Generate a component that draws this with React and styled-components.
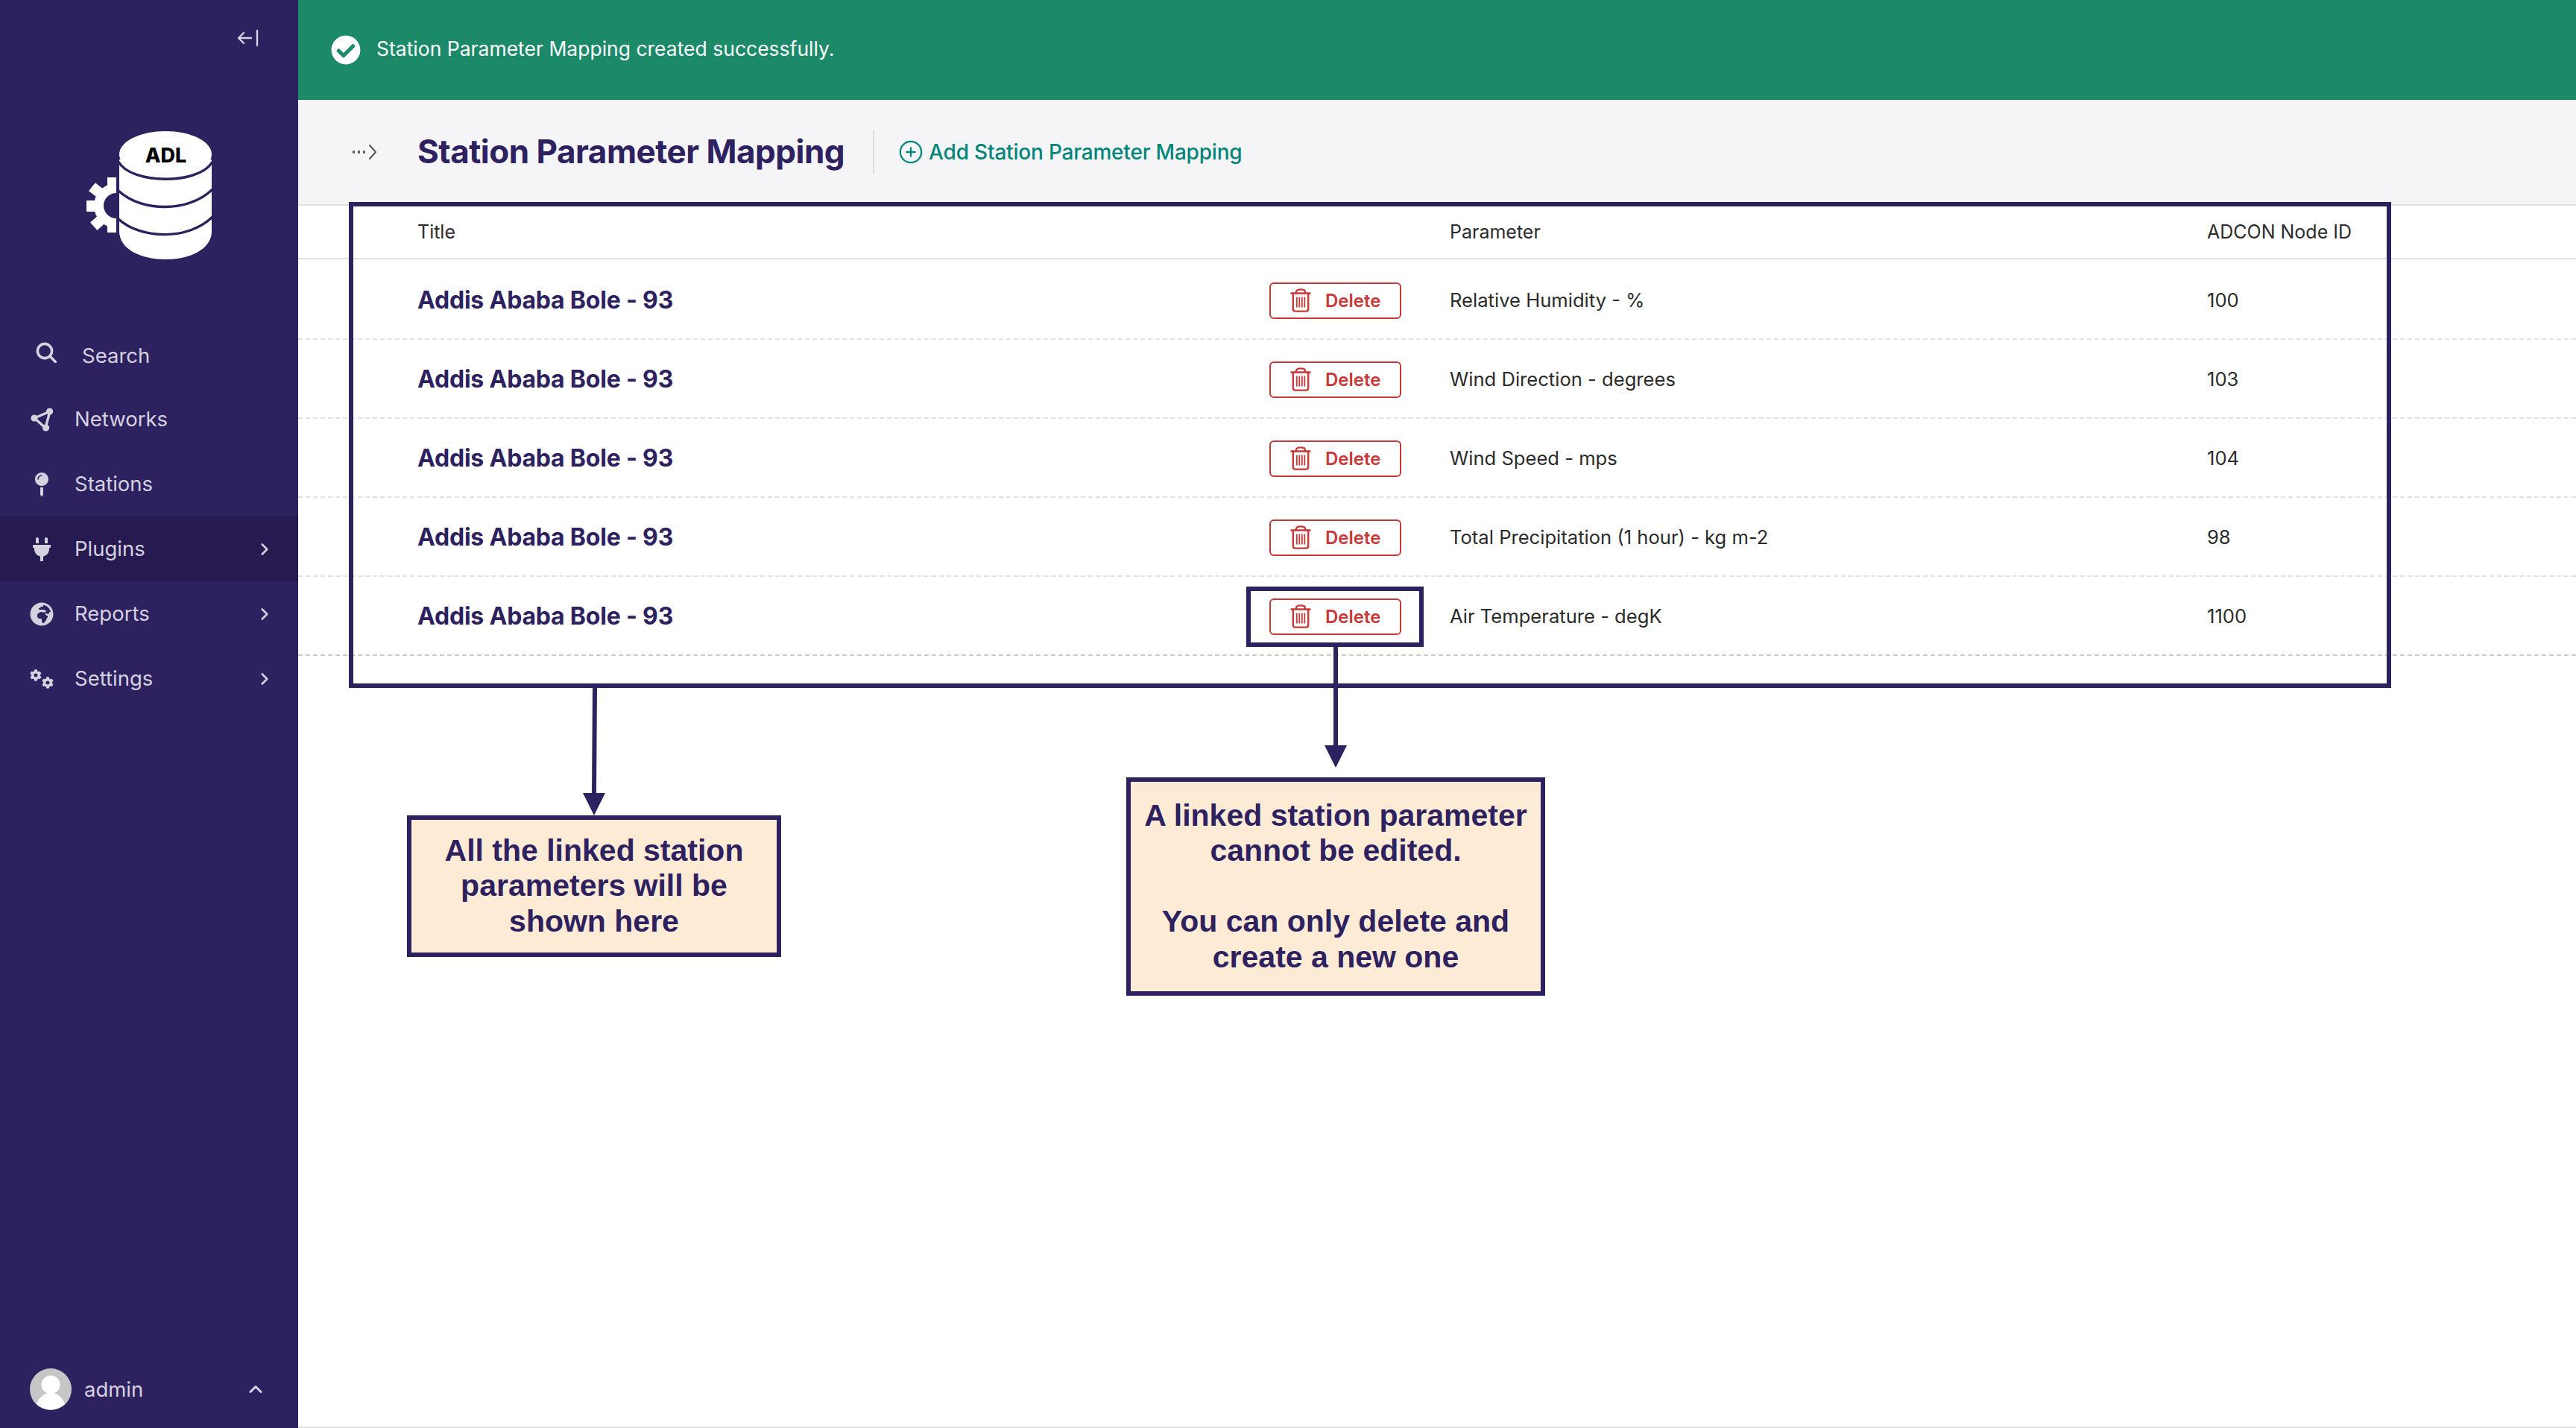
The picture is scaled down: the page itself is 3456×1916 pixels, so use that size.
import React from 'react'
import styled, { createGlobalStyle } from 'styled-components'
import { ChevronRight, ChevronUp, CirclePlus } from 'lucide-react'
import { FaCheckCircle, FaCog, FaGlobeAfrica, FaMapPin, FaPlug } from 'react-icons/fa'

const NAVY = '#2e2160'

const GlobalStyle = createGlobalStyle`
  html, body {
    margin: 0;
    padding: 0;
    background: #fff;
  }
  body {
    font-family: Inter, 'Liberation Sans', sans-serif;
  }
  * {
    box-sizing: border-box;
  }
`

const rows = [
  { param: 'Relative Humidity - %', node: '100' },
  { param: 'Wind Direction - degrees', node: '103' },
  { param: 'Wind Speed - mps', node: '104' },
  { param: 'Total Precipitation (1 hour) - kg m-2', node: '98' },
  { param: 'Air Temperature - degK', node: '1100' },
]

const CollapseIcon = () => (
  <svg width="30" height="24" viewBox="0 0 30 24" fill="none" stroke="#d5d2e0" strokeWidth="2.4" strokeLinecap="round" strokeLinejoin="round">
    <path d="M2 12h17M9 5l-7 7 7 7M27 2v20" />
  </svg>
)

const Logo = () => (
  <svg width="168" height="172" viewBox="116 176 168 172">
    <defs>
      <clipPath id="gear-clip">
        <rect x="110" y="230" width="46" height="90" />
      </clipPath>
    </defs>
    <g clipPath="url(#gear-clip)" fill="#fff">
      <path
        fillRule="evenodd"
        d="M156 246a30 30 0 1 0 0 60a30 30 0 1 0 0-60zM156 259a17 17 0 1 1 0 34a17 17 0 1 1 0-34z"
      />
      <rect x="144" y="238" width="20" height="16" />
      <rect x="144" y="298" width="20" height="14" />
      <rect x="116" y="269" width="16" height="15" />
      <rect x="122" y="248" width="15" height="14" transform="rotate(38 129 255)" />
      <rect x="124" y="292" width="15" height="14" transform="rotate(-42 131 299)" />
    </g>
    <path d="M160 214V310C160 335 190 348 222 348C254 348 284 335 284 310V214Z" fill="#fff" />
    <g fill="none" stroke={NAVY} strokeWidth="3.4">
      <path d="M159 217C176 248 268 248 285 217" />
      <path d="M159 256C190 285 254 285 285 254" />
      <path d="M159 294C190 322 254 322 285 291" />
    </g>
    <ellipse cx="222" cy="207" rx="62" ry="31" fill="#fff" />
    <text x="222.5" y="218" textAnchor="middle" fontFamily="Inter, sans-serif" fontSize="27" fontWeight="800" fill="#000">
      ADL
    </text>
  </svg>
)

const SearchIcon = () => (
  <svg width="28" height="28" viewBox="0 0 28 28" fill="none" stroke="#d5d2e0" strokeWidth="3.6" strokeLinecap="round">
    <circle cx="12" cy="12" r="9.6" />
    <path d="M19 19l7.4 7.4" />
  </svg>
)

const NetworkIcon = () => (
  <svg width="30" height="32" viewBox="0 0 30 32" fill="#d5d2e0">
    <path d="M5 14L26 5L20 27Z" fill="none" stroke="#d5d2e0" strokeWidth="3.4" strokeLinejoin="round" />
    <circle cx="5" cy="14" r="4.6" />
    <circle cx="25.6" cy="5" r="4.6" />
    <circle cx="20.6" cy="27" r="4.6" />
  </svg>
)

const TrashIcon = () => (
  <svg width="28" height="32" viewBox="0 0 28 32" fill="none" stroke="#c93838" strokeWidth="2.4" strokeLinecap="round" strokeLinejoin="round">
    <path d="M1.5 6.5h25" />
    <path d="M8 6V4.5C8 2.5 10 1.4 14 1.4s6 1.1 6 3.1V6" />
    <path d="M3.8 7v20.5c0 2 1.200 3.100 3 3.100h14.400c1.800 0 3-1.100 3-3.100V7" />
    <path d="M8.800 11.500v14M12.300 11.500v14M15.800 11.500v14M19.300 11.500v14" strokeLinecap="butt" strokeWidth="1.800" />
  </svg>
)

const BreadcrumbIcon = () => (
  <svg width="34" height="24" viewBox="0 0 34 24" fill="none">
    <path d="M1 12h3M8 12h3M15 12h3" stroke="#555" strokeWidth="3.4" />
    <path d="M24 3l8 9-8 9" stroke="#555" strokeWidth="2" strokeLinecap="round" strokeLinejoin="round" />
  </svg>
)

const AvatarIcon = () => (
  <svg width="56" height="56" viewBox="0 0 56 56">
    <circle cx="28" cy="28" r="28" fill="#c6c6c6" />
    <circle cx="28" cy="22" r="12.500" fill="#fff" />
    <path d="M9 48c3-9 10-15 19-15s16 6 19 15a28 28 0 0 1-38 0z" fill="#fff" />
  </svg>
)

const SettingsIcon = () => (
  <CogPair>
    <FaCog size={16} />
    <LowerCog>
      <FaCog size={16} />
    </LowerCog>
  </CogPair>
)

const navItems = [
  { label: 'Networks', icon: <NetworkIcon /> },
  { label: 'Stations', icon: <FaMapPin size={32} /> },
  { label: 'Plugins', icon: <FaPlug size={32} />, chevron: true, active: true },
  { label: 'Reports', icon: <FaGlobeAfrica size={32} />, chevron: true },
  { label: 'Settings', icon: <SettingsIcon />, chevron: true },
]

const App = () => {
  return (
    <>
      <GlobalStyle />
      <Page>
        <Sidebar>
          <CollapseRow>
            <CollapseIcon />
          </CollapseRow>
          <LogoRow>
            <Logo />
          </LogoRow>
          <SearchRow>
            <SearchSlot>
              <SearchIcon />
            </SearchSlot>
            <NavLabel>Search</NavLabel>
          </SearchRow>
          {navItems.map((item) => (
            <NavRow key={item.label} $active={item.active}>
              <NavIcon>{item.icon}</NavIcon>
              <NavLabel>{item.label}</NavLabel>
              {item.chevron && (
                <NavChevron $right={32}>
                  <ChevronRight size={26} strokeWidth={2.4} />
                </NavChevron>
              )}
            </NavRow>
          ))}
          <UserRow>
            <AvatarIcon />
            <UserName>admin</UserName>
            <NavChevron $right={43}>
              <ChevronUp size={28} strokeWidth={2.6} />
            </NavChevron>
          </UserRow>
        </Sidebar>
        <Main>
          <Banner>
            <FaCheckCircle size={40} color="#fff" />
            <BannerText>Station Parameter Mapping created successfully.</BannerText>
          </Banner>
          <PageHeader>
            <BreadcrumbSlot>
              <BreadcrumbIcon />
            </BreadcrumbSlot>
            <PageTitle>Station Parameter Mapping</PageTitle>
            <HeaderDivider />
            <AddLink>
              <CirclePlus size={34} strokeWidth={1.6} />
              Add Station Parameter Mapping
            </AddLink>
          </PageHeader>
          <HeadRow>
            <HeadCell>Title</HeadCell>
            <span />
            <HeadCell>Parameter</HeadCell>
            <HeadCell>ADCON Node ID</HeadCell>
          </HeadRow>
          <RowList>
            {rows.map((row, i) => (
              <DataRow key={row.node} $last={i === rows.length - 1}>
                <RowTitle>Addis Ababa Bole - 93</RowTitle>
                <DeleteButton>
                  <TrashIcon />
                  Delete
                </DeleteButton>
                <BodyCell>{row.param}</BodyCell>
                <BodyCell>{row.node}</BodyCell>
              </DataRow>
            ))}
          </RowList>
        </Main>

        {/* annotations drawn on top of the screenshot */}
        <Outline $x={468} $y={271} $w={2740} $h={652} />
        <Outline $x={1672} $y={787} $w={238} $h={81} />
        <ArrowLayer width="3456" height="1916">
          <path d="M798 922L797 1066" stroke={NAVY} strokeWidth="6" />
          <path d="M782 1064H812L797 1094Z" fill={NAVY} />
          <path d="M1792 868V1002" stroke={NAVY} strokeWidth="6" />
          <path d="M1777 1000H1807L1792 1030Z" fill={NAVY} />
        </ArrowLayer>
        <Callout $x={546} $y={1094} $w={502} $h={190}>
          All the linked station
          <br />
          parameters will be
          <br />
          shown here
        </Callout>
        <Callout $x={1511} $y={1043} $w={562} $h={293}>
          A linked station parameter
          <br />
          cannot be edited.
          <br />
          <br />
          You can only delete and
          <br />
          create a new one
        </Callout>
      </Page>
    </>
  )
}

const Page = styled.div`
  position: relative;
  display: flex;
  width: 3456px;
  height: 1916px;
  overflow: hidden;
`

const Sidebar = styled.aside`
  display: flex;
  flex-direction: column;
  flex: 0 0 400px;
  background: ${NAVY};
  color: #d5d2e0;
`

const CollapseRow = styled.div`
  display: flex;
  justify-content: flex-end;
  padding: 39px 52px 0 0;
  height: 176px;
`

const LogoRow = styled.div`
  display: flex;
  padding-left: 116px;
  height: 258px;
`

const SearchRow = styled.div`
  display: flex;
  align-items: center;
  height: 85px;
  padding: 2px 0 0 48px;
`

const SearchSlot = styled.div`
  display: flex;
  width: 62px;
  margin-top: -10px;
`

const NavRow = styled.div`
  display: flex;
  align-items: center;
  height: 87px;
  padding-left: 40px;
  background: ${({ $active }) => ($active ? '#271a50' : 'transparent')};
`

const NavIcon = styled.div`
  display: flex;
  justify-content: center;
  width: 32px;
  margin-right: 28px;
`

const CogPair = styled.div`
  display: flex;
  align-items: flex-start;
  height: 26px;
`

const LowerCog = styled.div`
  display: flex;
  margin-top: 10px;
`

const NavLabel = styled.span`
  font-size: 27.500px;
  line-height: 1;
`

const NavChevron = styled.div`
  display: flex;
  margin-left: auto;
  padding-right: ${({ $right }) => $right}px;
`

const UserRow = styled.div`
  display: flex;
  align-items: center;
  margin-top: auto;
  padding: 0 0 24px 40px;
`

const UserName = styled.span`
  margin-left: 17px;
  font-size: 27.500px;
`

const Main = styled.main`
  display: flex;
  flex-direction: column;
  flex: 1;
  border-bottom: 2px solid #e2e2e2;
`

const Banner = styled.div`
  display: flex;
  align-items: center;
  gap: 21px;
  height: 134px;
  padding-left: 44px;
  background: #1c8969;
`

const BannerText = styled.span`
  margin-top: -4px;
  font-size: 26.500px;
  color: #fff;
`

const PageHeader = styled.header`
  display: flex;
  align-items: center;
  height: 140px;
  background: #f5f5f7;
`

const BreadcrumbSlot = styled.div`
  display: flex;
  width: 160px;
  padding-left: 72px;
`

const PageTitle = styled.h1`
  margin: -2px 0 0;
  font-size: 44px;
  font-weight: 700;
  letter-spacing: -0.5px;
  color: ${NAVY};
`

const HeaderDivider = styled.div`
  width: 2px;
  height: 60px;
  margin: 0 32px 0 38px;
  background: #dedee2;
`

const AddLink = styled.a`
  display: flex;
  align-items: center;
  gap: 7px;
  font-size: 28px;
  font-weight: 500;
  letter-spacing: -0.2px;
  color: #00857a;
`

const HeadRow = styled.div`
  display: grid;
  grid-template-columns: 1143px 242px 1016px 1fr;
  align-items: center;
  height: 74px;
  padding-left: 160px;
  border-top: 2px solid #e2e2e2;
  border-bottom: 2px solid #e2e2e2;
`

const HeadCell = styled.span`
  font-size: 25px;
  color: #2b2b2b;
`

const RowList = styled.div`
  padding-top: 2px;
`

const DataRow = styled.div`
  display: grid;
  grid-template-columns: 1143px 242px 1016px 1fr;
  align-items: center;
  height: 106px;
  padding-left: 160px;
  border-bottom: 2px dashed ${({ $last }) => ($last ? '#cccccc' : '#e2e2e2')};
`

const RowTitle = styled.span`
  font-size: 32px;
  font-weight: 700;
  letter-spacing: -0.2px;
  color: ${NAVY};
`

const DeleteButton = styled.button`
  display: flex;
  align-items: center;
  gap: 19px;
  width: 177px;
  height: 49px;
  margin-top: 2px;
  padding: 0 0 0 26px;
  border: 2px solid #c93838;
  border-radius: 6px;
  background: #fff;
  font-family: Inter, sans-serif;
  font-size: 24px;
  font-weight: 600;
  color: #c93838;
`

const BodyCell = styled.span`
  font-size: 25.600px;
  color: #2b2b2b;
`

const Outline = styled.div`
  position: absolute;
  left: ${({ $x }) => $x}px;
  top: ${({ $y }) => $y}px;
  width: ${({ $w }) => $w}px;
  height: ${({ $h }) => $h}px;
  border: 6px solid ${NAVY};
`

const ArrowLayer = styled.svg`
  position: absolute;
  left: 0;
  top: 0;
  pointer-events: none;
`

const Callout = styled.div`
  position: absolute;
  left: ${({ $x }) => $x}px;
  top: ${({ $y }) => $y}px;
  width: ${({ $w }) => $w}px;
  height: ${({ $h }) => $h}px;
  display: flex;
  align-items: center;
  justify-content: center;
  text-align: center;
  border: 6px solid ${NAVY};
  background: #feebd6;
  font-family: 'Liberation Sans', Arial, sans-serif;
  font-size: 41px;
  font-weight: 700;
  line-height: 47.500px;
  color: ${NAVY};
`

export default App
